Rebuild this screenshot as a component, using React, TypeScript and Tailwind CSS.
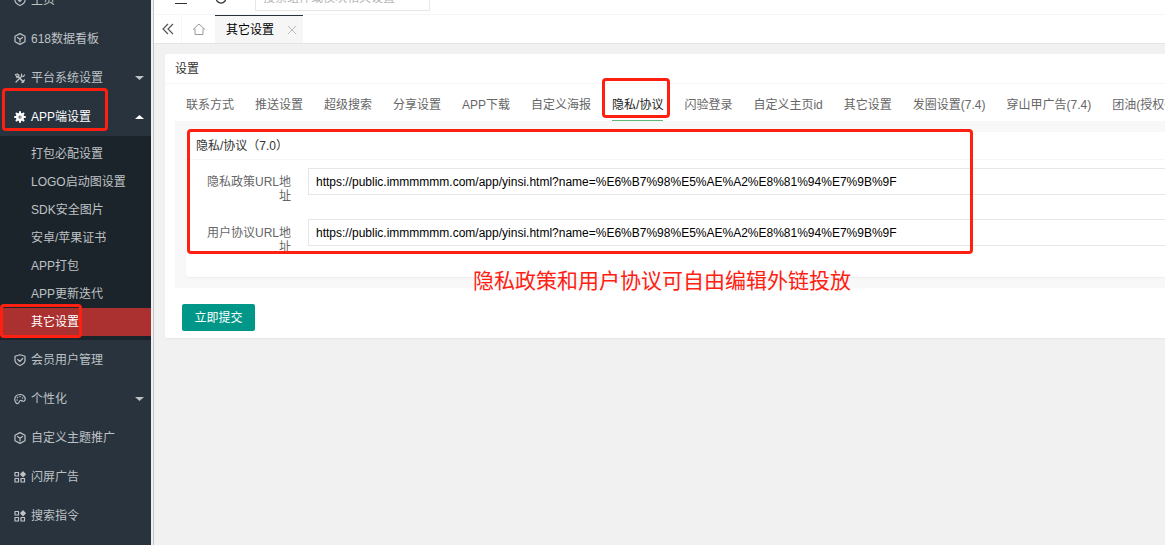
import { useState } from 'react'
import type { ReactNode } from 'react'

const svgProps = {
  viewBox: '0 0 24 24',
  fill: 'none',
  stroke: 'currentColor',
  strokeWidth: 2.4,
  strokeLinecap: 'round',
  strokeLinejoin: 'round',
} as const

function Icon({ children }: { children: ReactNode }) {
  return (
    <svg {...svgProps} className="h-3 w-3 shrink-0" aria-hidden="true">
      {children}
    </svg>
  )
}

function ShieldIcon() {
  return (
    <Icon>
      <path d="M12 1.500 2 4.500V13c0 4.500 4 7.500 10 10 6-2.500 10-5.500 10-10V4.500z" />
      <path d="m7.500 11 4 4 6-6" />
    </Icon>
  )
}

function CubeIcon() {
  return (
    <Icon>
      <path d="M12 1.200 22 6.500v11l-10 5.300L2 17.500v-11z" />
      <path d="m7 9 5 3.500L17 9M12 12.500V18" />
    </Icon>
  )
}

function ToolsIcon() {
  return (
    <Icon>
      <path strokeWidth={3.500} d="m8 9 11 11" />
      <path d="m4 20 11-11M15 4v4l4 1 2-3M3 5l4-1 3 3-4 4zM16 21l5-5" />
    </Icon>
  )
}

function GearIcon() {
  return (
    <Icon>
      <circle cx="12" cy="12" r="5.500" strokeWidth={5} />
      <circle cx="12" cy="12" r="1" strokeWidth={1} />
      <path strokeWidth={4} d="M12 2v3M12 19v3M2 12h3M19 12h3M5 5l2 2M17 17l2 2M5 19l2-2M17 7l2-2" />
    </Icon>
  )
}

function PaletteIcon() {
  return (
    <Icon>
      <path d="M12 3C5.500 3 1.500 7 1.500 12.500S5 22 8 21c3.500-1 1-5 4.500-6 3-1 5 3 8 1 4-3 1.500-13-8.500-13z" />
      <path strokeWidth={3} d="M6 14v.1M7 9v.1M12 7v.1M17 10v.1" />
    </Icon>
  )
}

function AppsIcon() {
  return (
    <Icon>
      <path d="M2 3h7v7H2zM2 15h7v7H2zM14 15h7v7h-7z" />
      <path fill="currentColor" d="m18 2 4.500 4.500L18 11l-4.500-4.500z" />
    </Icon>
  )
}

type NavItem = { label: string; icon: ReactNode; caret?: 'up' | 'down'; children?: string[] }

const NAV: NavItem[] = [
  { label: '主页', icon: <ShieldIcon /> },
  { label: '618数据看板', icon: <CubeIcon /> },
  { label: '平台系统设置', icon: <ToolsIcon />, caret: 'down' },
  {
    label: 'APP端设置',
    icon: <GearIcon />,
    caret: 'up',
    children: ['打包必配设置', 'LOGO启动图设置', 'SDK安全图片', '安卓/苹果证书', 'APP打包', 'APP更新迭代', '其它设置'],
  },
  { label: '会员用户管理', icon: <ShieldIcon /> },
  { label: '个性化', icon: <PaletteIcon />, caret: 'down' },
  { label: '自定义主题推广', icon: <CubeIcon /> },
  { label: '闪屏广告', icon: <AppsIcon /> },
  { label: '搜索指令', icon: <AppsIcon /> },
]

const TABS = [
  '联系方式', '推送设置', '超级搜索', '分享设置', 'APP下载', '自定义海报', '隐私/协议',
  '闪验登录', '自定义主页id', '其它设置', '发圈设置(7.4)', '穿山甲广告(7.4)', '团油(授权码)',
]

const URL_VALUE = 'https://public.immmmmm.com/app/yinsi.html?name=%E6%B7%98%E5%AE%A2%E8%81%94%E7%9B%9F'

const FIELDS = [
  { id: 'privacy', label: '隐私政策URL地址' },
  { id: 'agreement', label: '用户协议URL地址' },
]

function Caret({ dir }: { dir: 'up' | 'down' }) {
  return (
    <svg viewBox="0 0 10 5" className="ml-auto h-1 w-[9px]" preserveAspectRatio="none" fill="currentColor" aria-hidden="true">
      <path d={dir === 'up' ? 'M0 5 5 0l5 5z' : 'M0 0h10L5 5z'} />
    </svg>
  )
}

function Mark({ className }: { className: string }) {
  return <span className={`pointer-events-none absolute z-10 rounded-sm border-3 border-[#ff2012] ${className}`} />
}

function Sidebar() {
  return (
    <nav className="-mt-5 w-[151px] shrink-0 bg-[#28333e] text-[#bfc2c5]">
      <ul>
        {NAV.map((item) => (
          <li key={item.label}>
            <a
              href="#"
              className={`relative flex h-[39px] items-center gap-[5px] pr-[7px] pl-[14px] ${item.children ? 'text-white' : ''}`}
            >
              {item.icon}
              {item.label}
              {item.caret && <Caret dir={item.caret} />}
              {item.children && <Mark className="-top-[9px] left-0.5 h-[43px] w-[106px]" />}
            </a>
            {item.children && (
              <ul className="bg-[#1c242b] py-1">
                {item.children.map((child) => (
                  <li key={child} className="relative">
                    <a
                      href="#"
                      className={`flex h-7 items-center pl-[31px] ${child === '其它设置' ? 'bg-[#aa3130] text-white' : ''}`}
                    >
                      {child}
                    </a>
                    {child === '其它设置' && <Mark className="-top-1 left-0 h-[34px] w-[82px]" />}
                  </li>
                ))}
              </ul>
            )}
          </li>
        ))}
      </ul>
    </nav>
  )
}

function TopBar() {
  return (
    <header className="flex h-[15px] items-start border-b border-[#f6f6f6] bg-white">
      <button type="button" aria-label="菜单" className="ml-[21px] h-1 w-3 border-b border-[#333]" />
      <button type="button" aria-label="刷新" className="ml-7 flex h-1 w-3 items-end overflow-hidden">
        <svg viewBox="0 0 12 12" className="h-3 w-3 shrink-0" fill="none" stroke="#333" strokeWidth="1.3">
          <path d="M10.800 6A4.800 4.800 0 1 1 6 1.500" />
        </svg>
      </button>
      <div className="ml-7 flex h-[11px] flex-col justify-end overflow-hidden">
        <input
          aria-label="搜索"
          placeholder="搜索组件或模块相关设置"
          className="h-[27px] w-[175px] shrink-0 border border-[#e6e6e6] px-[7px] placeholder:text-[#b5b5b5]"
        />
      </div>
    </header>
  )
}

function PageTabs() {
  return (
    <div className="flex h-[29px] border-b border-[#e4e4e4] bg-white">
      <button type="button" aria-label="向左" className="flex w-[28px] items-center justify-center border-r border-[#f6f6f6] text-[#555]">
        <svg viewBox="0 0 12 12" className="h-3 w-3" fill="none" stroke="currentColor" strokeWidth="1.2">
          <path d="M6 1 1 6l5 5M11 1 6 6l5 5" />
        </svg>
      </button>
      <button type="button" aria-label="首页" className="flex w-[33px] items-center justify-center text-[#999]">
        <svg viewBox="0 0 14 12" className="h-3 w-3.5" fill="none" stroke="currentColor">
          <path d="M1 6.500 7 1l6 5.500M3 5.500v6h8v-6" />
        </svg>
      </button>
      <div className="flex w-[88px] items-center justify-between border-t border-[#28333e] bg-[#f6f6f6] pr-[7px] pl-[11px] text-black">
        其它设置
        <button type="button" aria-label="关闭" className="text-[#bbb]">
          <svg viewBox="0 0 8 8" className="h-2 w-2" fill="none" stroke="currentColor">
            <path d="m0 0 8 8M8 0 0 8" />
          </svg>
        </button>
      </div>
    </div>
  )
}

function SettingTabs({ active, onSelect }: { active: string; onSelect: (tab: string) => void }) {
  return (
    <div className="flex h-[37px] gap-[21px] overflow-x-clip px-[11px] whitespace-nowrap text-[#666]">
      {TABS.map((tab) => (
        <button
          key={tab}
          type="button"
          onClick={() => onSelect(tab)}
          className={`relative shrink-0 pt-1 ${tab === active ? 'text-[#222]' : ''}`}
        >
          {tab}
          {tab === active && (
            <>
              <span className="absolute inset-x-0 bottom-0 h-px bg-[#5fb878]" />
              <Mark className="-top-[6px] -left-[10px] h-[40px] w-[68px]" />
            </>
          )}
        </button>
      ))}
    </div>
  )
}

export default function App() {
  const [active, setActive] = useState('隐私/协议')

  return (
    <div className="flex h-screen overflow-hidden bg-[#f1f1f1] font-['Liberation_Sans','Noto_Sans_CJK_SC',sans-serif] text-[12px] text-[#333]">
      <Sidebar />
      <div className="w-[3px] shrink-0 border-r border-[#c4c4c4] bg-[#f0f0f0]" />
      <main className="min-w-0 flex-1">
        <TopBar />
        <PageTabs />
        <section className="mt-[10px] ml-[11px] rounded-l-xs bg-white shadow-xs">
          <h1 className="flex h-[30px] items-center border-b border-[#f6f6f6] px-[10px]">设置</h1>
          <form onSubmit={(e) => e.preventDefault()}>
            <div className="ml-[10px]">
              <SettingTabs active={active} onSelect={setActive} />
              <div className="relative bg-[#f8f8f8] py-[11px] pl-[11px]">
                <Mark className="top-2 left-3 h-[125px] w-[786px]" />
                <div className="h-[145px] rounded-l-xs bg-white shadow-xs">
                  <h2 className="flex h-[28px] items-center border-b border-[#f6f6f6] px-[10px]">隐私/协议（7.0）</h2>
                  <div className="flex flex-col gap-6 pt-2">
                    {FIELDS.map((field) => (
                      <div key={field.id} className="flex h-[27px]">
                        <label htmlFor={field.id} className="w-[105px] shrink-0 pt-[7px] pl-[15px] text-right leading-[14px] text-[#666]">
                          {field.label}
                        </label>
                        <input
                          id={field.id}
                          defaultValue={URL_VALUE}
                          className="ml-[17px] min-w-0 flex-1 border border-r-0 border-[#e6e6e6] px-[7px] text-black"
                        />
                      </div>
                    ))}
                  </div>
                </div>
                <p className="absolute top-[146px] left-[298px] text-[21px] leading-7 whitespace-nowrap text-[#ff2012]">
                  隐私政策和用户协议可自由编辑外链投放
                </p>
              </div>
            </div>
            <div className="px-[17px] pt-4 pb-[7px]">
              <button type="submit" className="h-[27px] w-[73px] rounded-xs bg-[#009688] text-white">
                立即提交
              </button>
            </div>
          </form>
        </section>
      </main>
    </div>
  )
}
